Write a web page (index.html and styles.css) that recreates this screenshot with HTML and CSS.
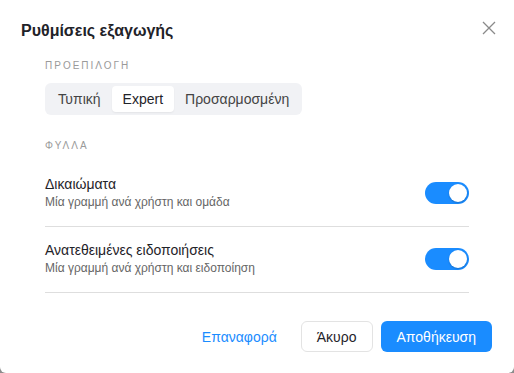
FILE: index.html
```html
<!DOCTYPE html>
<html lang="el">
<head>
    <meta charset="UTF-8">
    <title>Ρυθμίσεις εξαγωγής</title>
    <link rel="stylesheet" href="styles.css">
</head>
<body>
<div class="dialog">
    <div class="dialog-header">
        <h1 class="dialog-title">Ρυθμίσεις εξαγωγής</h1>
        <button class="close-btn" aria-label="Κλείσιμο">
            <svg width="14" height="14" viewBox="0 0 14 14">
                <path d="M1 1 L13 13 M13 1 L1 13" stroke="#8a8a8a" stroke-width="1.3" fill="none"/>
            </svg>
        </button>
    </div>

    <div class="dialog-body">
        <div class="section-label">Προεπιλογή</div>
        <div class="segmented">
            <span class="segment">Τυπική</span>
            <span class="segment active">Expert</span>
            <span class="segment">Προσαρμοσμένη</span>
        </div>

        <div class="section-label sheets-label">Φύλλα</div>
        <div class="sheet-row">
            <div class="sheet-text">
                <div class="sheet-name">Δικαιώματα</div>
                <div class="sheet-desc">Μία γραμμή ανά χρήστη και ομάδα</div>
            </div>
            <span class="toggle on"><span class="knob"></span></span>
        </div>
        <div class="sheet-row">
            <div class="sheet-text">
                <div class="sheet-name">Ανατεθειμένες ειδοποιήσεις</div>
                <div class="sheet-desc">Μία γραμμή ανά χρήστη και ειδοποίηση</div>
            </div>
            <span class="toggle on"><span class="knob"></span></span>
        </div>
    </div>

    <div class="dialog-footer">
        <button class="btn btn-link">Επαναφορά</button>
        <button class="btn btn-default">Άκυρο</button>
        <button class="btn btn-primary">Αποθήκευση</button>
    </div>
</div>
</body>
</html>
```

FILE: styles.css
```css
/* General Styles */
html, body {
    margin: 0;
    height: 100%;
}

body {
    background-color: #8c8c8c;
    font-family: "Liberation Sans", Arial, sans-serif;
    color: #1f2329;
}

.dialog {
    background-color: #fff;
    height: 373px;
    box-sizing: border-box;
    border-radius: 0 0 6px 6px;
    display: flex;
    flex-direction: column;
}

/* Header */
.dialog-header {
    display: flex;
    align-items: center;
    justify-content: space-between;
    padding: 20px 18px 0 21px;
}

.dialog-title {
    margin: 0;
    font-size: 16px;
    font-weight: bold;
    line-height: 21px;
    color: #1f2329;
}

.close-btn {
    border: none;
    background: none;
    padding: 0;
    width: 14px;
    height: 14px;
    margin-top: -6px;
    cursor: pointer;
}

.close-btn svg {
    display: block;
}

/* Body */
.dialog-body {
    padding: 0 45px;
    flex: 1;
}

.section-label {
    margin-top: 19px;
    font-size: 10px;
    line-height: 12px;
    letter-spacing: 2px;
    text-transform: uppercase;
    color: #9a9a9a;
}

.sheets-label {
    margin-top: 25px;
    margin-bottom: 9px;
}

.segmented {
    display: inline-flex;
    margin-top: 11px;
    padding: 3px 2px;
    background-color: #f1f2f5;
    border-radius: 6px;
}

.segment {
    padding: 0 11px;
    font-size: 14px;
    line-height: 26px;
    color: #444;
    border-radius: 4px;
}

.segment.active {
    background-color: #fff;
    color: #1f2329;
    box-shadow: 0 1px 2px rgba(0, 0, 0, 0.06);
}

.sheet-row {
    display: flex;
    align-items: center;
    justify-content: space-between;
    padding: 14px 0 15px;
    border-bottom: 1px solid #dedede;
}

.sheet-name {
    font-size: 14px;
    line-height: 19px;
    color: #1f2329;
}

.sheet-desc {
    font-size: 12px;
    line-height: 17px;
    color: #666;
}

.toggle {
    position: relative;
    width: 44px;
    height: 22px;
    border-radius: 11px;
    background-color: #ccc;
    flex-shrink: 0;
}

.toggle.on {
    background-color: #1a8cff;
}

.toggle .knob {
    position: absolute;
    top: 2px;
    left: 2px;
    width: 18px;
    height: 18px;
    border-radius: 50%;
    background-color: #fff;
    box-shadow: 0 1px 2px rgba(0, 0, 0, 0.2);
}

.toggle.on .knob {
    left: 24px;
}

/* Footer */
.dialog-footer {
    display: flex;
    justify-content: flex-end;
    align-items: center;
    gap: 8px;
    padding: 0 22px 21px;
}

.btn {
    font-family: "Liberation Sans", Arial, sans-serif;
    font-size: 14px;
    height: 31px;
    padding: 0 15px;
    border-radius: 6px;
    border: 1px solid transparent;
    background: none;
    cursor: pointer;
}

.btn-link {
    color: #1a8cff;
}

.btn-default {
    background-color: #fff;
    border-color: #e3e3e3;
    color: #1f2329;
}

.btn-primary {
    background-color: #1a8cff;
    color: #fff;
}
```
